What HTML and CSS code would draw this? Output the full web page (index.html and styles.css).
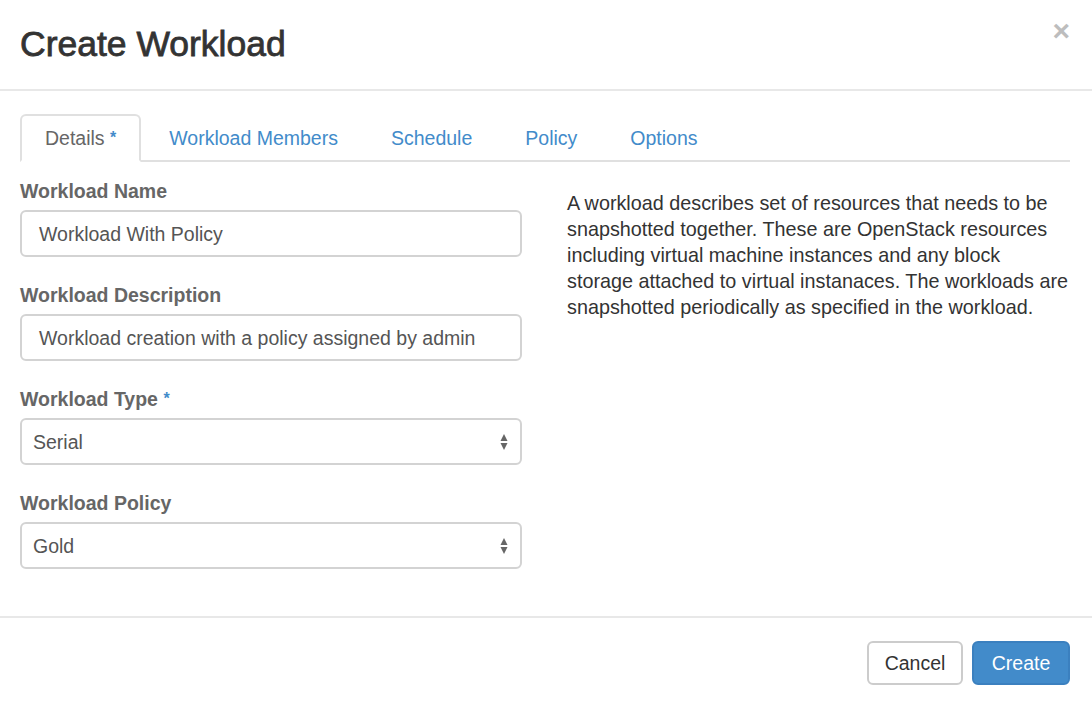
FILE: index.html
```html
<!DOCTYPE html>
<html lang="en">
<head>
<meta charset="utf-8">
<title>Create Workload</title>
<link rel="stylesheet" href="styles.css">
</head>
<body>
<div class="modal">
  <div class="modal-header">
    <h1 class="modal-title">Create Workload</h1>
    <button class="close" type="button" aria-label="Close">×</button>
  </div>
  <div class="modal-body">
    <ul class="nav-tabs">
      <li class="tab active"><a>Details <span class="star">*</span></a></li>
      <li class="tab"><a>Workload Members</a></li>
      <li class="tab"><a>Schedule</a></li>
      <li class="tab"><a>Policy</a></li>
      <li class="tab"><a>Options</a></li>
    </ul>
    <div class="row">
      <div class="col-form">
        <div class="form-group">
          <label class="label">Workload Name</label>
          <div class="input">Workload With Policy</div>
        </div>
        <div class="form-group">
          <label class="label">Workload Description</label>
          <div class="input">Workload creation with a policy assigned by admin</div>
        </div>
        <div class="form-group">
          <label class="label">Workload Type <span class="star">*</span></label>
          <div class="select"><span>Serial</span>
            <svg class="arrows" width="8" height="18" viewBox="0 0 8 18"><path d="M4 1 L7.5 8 L0.5 8 Z" fill="#666"/><path d="M0.5 10 L7.5 10 L4 17 Z" fill="#666"/></svg>
          </div>
        </div>
        <div class="form-group">
          <label class="label">Workload Policy</label>
          <div class="select"><span>Gold</span>
            <svg class="arrows" width="8" height="18" viewBox="0 0 8 18"><path d="M4 1 L7.5 8 L0.5 8 Z" fill="#666"/><path d="M0.5 10 L7.5 10 L4 17 Z" fill="#666"/></svg>
          </div>
        </div>
      </div>
      <div class="col-help">
        <p>A workload describes set of resources that needs to be<br>snapshotted together. These are OpenStack resources<br>including virtual machine instances and any block<br>storage attached to virtual instanaces. The workloads are<br>snapshotted periodically as specified in the workload.</p>
      </div>
    </div>
  </div>
  <div class="modal-footer">
    <button class="btn btn-default" type="button">Cancel</button>
    <button class="btn btn-primary" type="button">Create</button>
  </div>
</div>
</body>
</html>
```

FILE: styles.css
```css
* { box-sizing: border-box; }
html, body {
  margin: 0;
  padding: 0;
  background: #fff;
}
body {
  font-family: "Liberation Sans", Arial, Helvetica, sans-serif;
  font-size: 19.5px;
  line-height: 26px;
  color: #333;
}
.modal {
  width: 1092px;
  height: 708px;
  background: #fff;
}
.modal-header {
  height: 91px;
  border-bottom: 2px solid #e8e8e8;
  display: flex;
  justify-content: space-between;
  align-items: flex-start;
  padding: 0 22px 0 20px;
}
.modal-title {
  margin: 0;
  padding-top: 25px;
  font-size: 35.5px;
  line-height: 38px;
  font-weight: 400;
  -webkit-text-stroke: 0.8px #333;
  color: #333;
}
.close {
  margin-top: 14px;
  border: 0;
  background: none;
  padding: 0;
  font-family: "Liberation Sans", Arial, sans-serif;
  font-size: 30px;
  line-height: 34px;
  font-weight: 700;
  color: #bdbdbd;
  cursor: pointer;
}
.modal-body {
  padding: 23px 22px 0 20px;
  height: 525px;
}
.nav-tabs {
  list-style: none;
  margin: 0;
  padding: 0;
  display: flex;
  border-bottom: 2px solid #e0e0e0;
}
.tab {
  margin-right: 3px;
  margin-bottom: -2px;
}
.tab a {
  display: block;
  height: 48px;
  padding: 9px 23px 0;
  border: 2px solid transparent;
  border-radius: 6px 6px 0 0;
  color: #428bca;
  line-height: 26px;
}
.tab.active a {
  color: #666;
  border-color: #e0e0e0;
  border-bottom-color: #fff;
}
.row {
  display: flex;
  gap: 45px;
}
.col-form {
  width: 502px;
  padding-top: 16px;
}
.form-group {
  margin-bottom: 25px;
}
.label {
  display: block;
  font-weight: 700;
  color: #666;
  margin-bottom: 6px;
}
.star {
  color: #428bca;
  font-size: 16px;
  font-weight: 700;
  vertical-align: 2px;
}
.input, .select {
  height: 47px;
  border: 2px solid #d3d3d3;
  border-radius: 6px;
  color: #555;
  display: flex;
  align-items: center;
}
.input {
  padding: 0 17px;
}
.select {
  padding: 0 12px 0 11px;
  justify-content: space-between;
}
.col-help {
  width: 503px;
  padding-top: 28px;
}
.col-help p {
  margin: 0;
  font-size: 19.8px;
  color: #333;
  white-space: nowrap;
}
.modal-footer {
  border-top: 2px solid #e8e8e8;
  padding: 23px 22px 0 20px;
  display: flex;
  justify-content: flex-end;
  gap: 9px;
}
.btn {
  height: 44px;
  padding: 0 10px;
  border-radius: 6px;
  font-family: "Liberation Sans", Arial, sans-serif;
  font-size: 19.5px;
  line-height: 26px;
  cursor: pointer;
}
.btn-default {
  width: 96px;
  background: #fff;
  color: #333;
  border: 2px solid #ccc;
}
.btn-primary {
  width: 98px;
  background: #428bca;
  color: #fff;
  border: 2px solid #3b80bf;
}
```
